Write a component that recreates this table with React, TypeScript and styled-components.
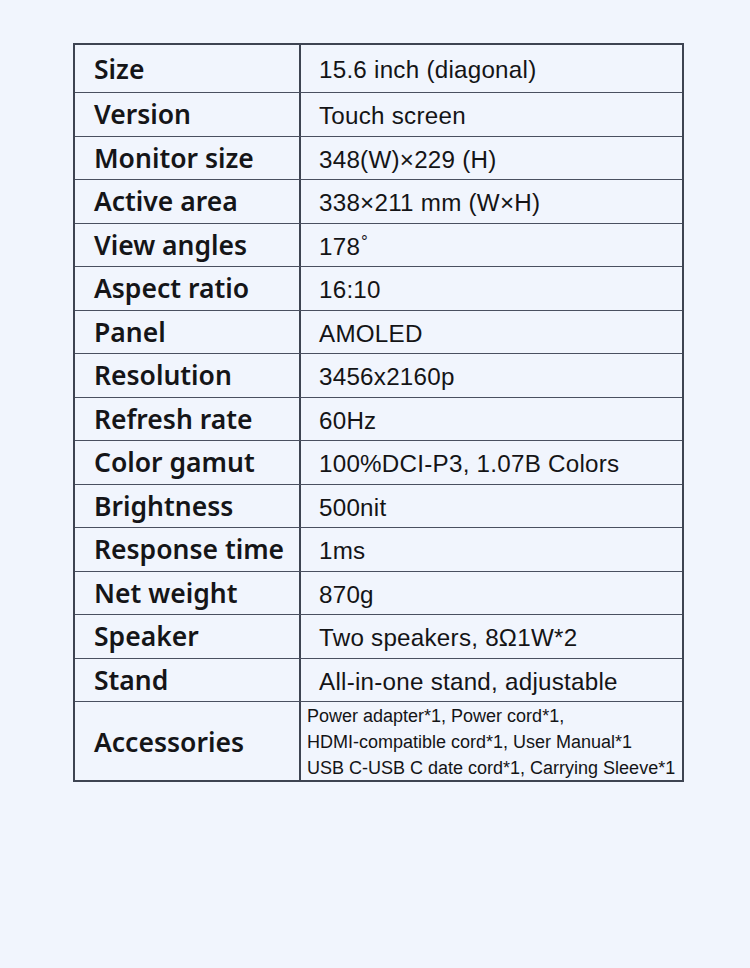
import React from 'react'
import styled, { createGlobalStyle } from 'styled-components'

const GlobalStyle = createGlobalStyle`
  html, body {
    margin: 0;
    padding: 0;
    background: #f1f5fd;
  }
`

const Page = styled.div`
  width: 750px;
  height: 968px;
  padding: 43px 0 0 73px;
  box-sizing: border-box;
  background: #f1f5fd;
`

const Table = styled.div`
  width: 611px;
  border: 2px solid #3e4452;
  box-sizing: border-box;
`

const Row = styled.div<{ $h: number; $first?: boolean }>`
  display: grid;
  grid-template-columns: 226px 1fr;
  height: ${(p) => p.$h}px;
  border-top: ${(p) => (p.$first ? 'none' : '1px solid #4a5060')};
  box-sizing: border-box;
`

const Label = styled.div`
  display: flex;
  align-items: center;
  padding: 0 0 0 19px;
  border-right: 2px solid #3e4452;
  font-family: 'Noto Sans', sans-serif;
  font-weight: 600;
  font-size: 26.5px;
  color: #151518;
  white-space: nowrap;
`

const Value = styled.div<{ $small?: boolean }>`
  display: flex;
  flex-direction: column;
  justify-content: center;
  padding: ${(p) => (p.$small ? '1px 0 0 6px' : '3px 0 0 18px')};
  font-family: 'Liberation Sans', Arial, sans-serif;
  font-size: ${(p) => (p.$small ? '18px' : '24.2px')};
  letter-spacing: ${(p) => (p.$small ? '0' : '0.25px')};
  line-height: ${(p) => (p.$small ? '26px' : '1.2')};
  color: #141416;
  white-space: nowrap;
`

const Degree = styled.span`
  font-size: 0.7em;
  position: relative;
  top: -0.45em;
  margin-left: 1px;
`

const specs: [string, React.ReactNode][] = [
  ['Size', '15.6 inch (diagonal)'],
  ['Version', 'Touch screen'],
  ['Monitor size', '348(W)×229 (H)'],
  ['Active area', '338×211 mm (W×H)'],
  ['View angles', <>178<Degree>°</Degree></>],
  ['Aspect ratio', '16:10'],
  ['Panel', 'AMOLED'],
  ['Resolution', '3456x2160p'],
  ['Refresh rate', '60Hz'],
  ['Color gamut', '100%DCI-P3, 1.07B Colors'],
  ['Brightness', '500nit'],
  ['Response time', '1ms'],
  ['Net weight', '870g'],
  ['Speaker', 'Two speakers, 8Ω1W*2'],
  ['Stand', 'All-in-one stand, adjustable'],
]

const accessories = [
  'Power adapter*1, Power cord*1,',
  'HDMI-compatible cord*1, User Manual*1',
  'USB C-USB C date cord*1, Carrying Sleeve*1',
]

export default function App() {
  return (
    <Page>
      <GlobalStyle />
      <Table>
        {specs.map(([label, value], i) => (
          <Row key={label} $h={i === 0 ? 47 : 43.5} $first={i === 0}>
            <Label>{label}</Label>
            <Value>
              <span>{value}</span>
            </Value>
          </Row>
        ))}
        <Row $h={79}>
          <Label>Accessories</Label>
          <Value $small>
            {accessories.map((line) => (
              <span key={line}>{line}</span>
            ))}
          </Value>
        </Row>
      </Table>
    </Page>
  )
}
